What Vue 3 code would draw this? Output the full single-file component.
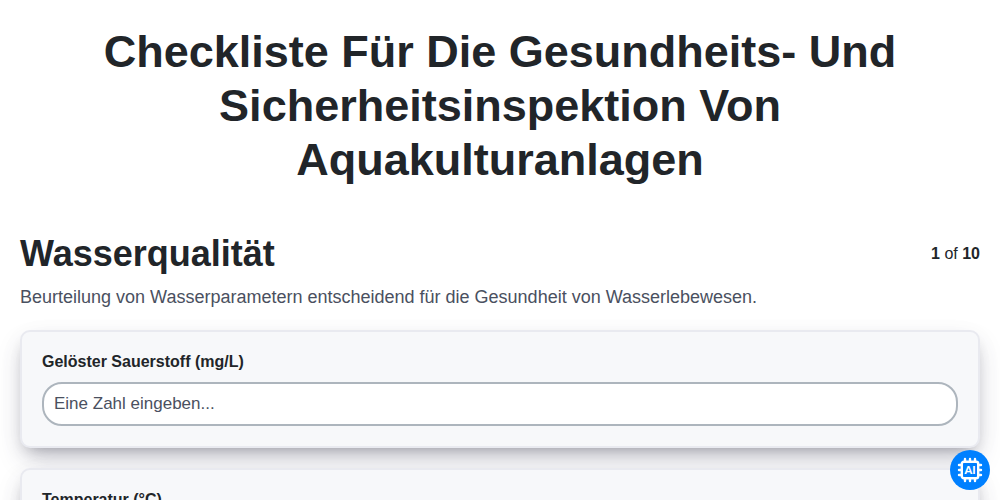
<script setup>
import { ref } from 'vue'

const fields = ref([
  { id: 'sauerstoff', label: 'Gelöster Sauerstoff (mg/L)', value: '' },
  { id: 'temperatur', label: 'Temperatur (°C)', value: '' },
])
</script>

<template>
  <main class="page">
    <h1 class="title">Checkliste Für Die Gesundheits- Und Sicherheitsinspektion Von Aquakulturanlagen</h1>
    <header class="section-head">
      <h2 class="section-title">Wasserqualität</h2>
      <span class="progress"><b>1</b> of <b>10</b></span>
    </header>
    <p class="intro">Beurteilung von Wasserparametern entscheidend für die Gesundheit von Wasserlebewesen.</p>
    <form class="fields" @submit.prevent>
      <div v-for="field in fields" :key="field.id" class="card">
        <label class="label" :for="field.id">{{ field.label }}</label>
        <input :id="field.id" v-model="field.value" class="input" type="text" inputmode="decimal" placeholder="Eine Zahl eingeben..." />
      </div>
    </form>
    <button class="assistant" type="button" aria-label="AI">
      <svg width="26" height="26" viewBox="0 0 26 26" fill="none" stroke="#fff" aria-hidden="true">
        <rect x="4.8" y="4.8" width="16.4" height="16.4" rx="2" stroke-width="2.4" />
        <path stroke-width="2.4" stroke-linecap="round" d="M8 2v2M13 2v2M18 2v2M8 22v2M13 22v2M18 22v2M2 8h2M2 13h2M2 18h2M22 8h2M22 13h2M22 18h2" />
        <text class="chip-text" x="13" y="17" text-anchor="middle">AI</text>
      </svg>
    </button>
  </main>
</template>

<style>
html {
  height: 100%;
  overflow: hidden;
}

body {
  height: 100%;
  margin: 0;
  overflow: auto;
  background: #fff;
  scrollbar-width: none;
}
</style>

<style scoped>
.page {
  box-sizing: border-box;
  padding: 25px 20px;
  color: #212529;
  font-family: "Liberation Sans", Arial, sans-serif;
  font-size: 16px;
}

.title {
  max-width: 860px;
  margin: 0 auto 45px;
  font-size: 45px;
  line-height: 54px;
  text-align: center;
}

.section-head {
  display: flex;
  align-items: center;
  justify-content: space-between;
  margin-bottom: 8px;
}

.section-title {
  margin: 0;
  font-size: 36px;
  line-height: 43px;
}

.progress {
  line-height: 24px;
}

.intro {
  margin: 0 0 18px;
  color: #4a5060;
  font-size: 18px;
  line-height: 29px;
}

.fields {
  display: flex;
  flex-direction: column;
  gap: 20px;
}

.card {
  display: flex;
  flex-direction: column;
  gap: 10px;
  padding: 20px;
  border: 2px solid #e9eaf0;
  border-radius: 10px;
  background: #f7f8fa;
  box-shadow: 0 13px 27px -5px rgba(50, 50, 93, 0.25), 0 8px 16px -8px rgba(0, 0, 0, 0.3), 0 6px 30px rgba(0, 0, 0, 0.03);
}

.label {
  font-weight: 700;
  line-height: 20px;
}

.input {
  box-sizing: border-box;
  width: 100%;
  height: 44px;
  padding: 0 10px;
  border: 2px solid #adb5bd;
  border-radius: 20px;
  background: #fff;
  color: #212529;
  font-family: inherit;
  font-size: 17px;
}

.input::placeholder {
  color: #4a5060;
  opacity: 1;
}

.assistant {
  position: fixed;
  right: 10px;
  bottom: 10px;
  display: flex;
  align-items: center;
  justify-content: center;
  width: 40px;
  height: 40px;
  padding: 0;
  border: 0;
  border-radius: 50%;
  background: #0080ff;
  cursor: pointer;
}

.chip-text {
  fill: #fff;
  stroke: none;
  font-family: Lato, sans-serif;
  font-size: 11px;
  font-weight: 900;
}
</style>
